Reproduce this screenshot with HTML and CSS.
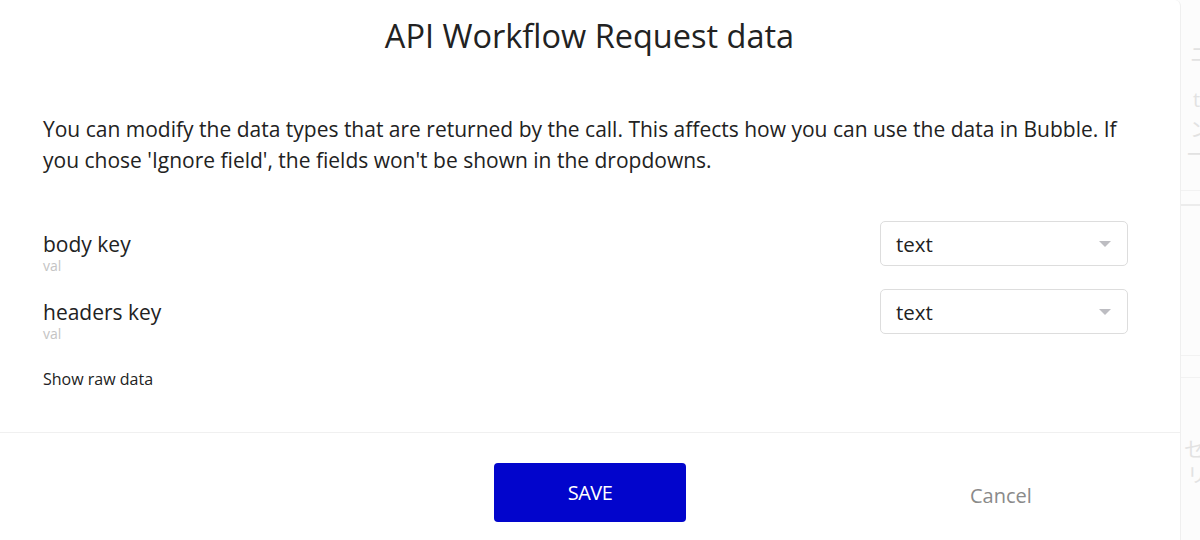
FILE: index.html
```html
<!DOCTYPE html>
<html lang="en">
<head>
  <meta charset="UTF-8" />
  <title>API Workflow Request data</title>
  <meta name="viewport" content="width=device-width, initial-scale=1.0" />
  <link rel="stylesheet" href="styles.css">
</head>
<body>

  <div class="page">
    <div class="modal">
      <h1 class="title">API Workflow Request data</h1>

      <p class="intro">You can modify the data types that are returned by the call. This affects how you can use the data in Bubble. If you chose 'Ignore field', the fields won't be shown in the dropdowns.</p>

      <div class="field-row">
        <div class="field-label">
          <div class="key">body key</div>
          <div class="val">val</div>
        </div>
        <div class="dropdown">
          <span>text</span>
          <span class="caret"></span>
        </div>
      </div>

      <div class="field-row">
        <div class="field-label">
          <div class="key">headers key</div>
          <div class="val">val</div>
        </div>
        <div class="dropdown">
          <span>text</span>
          <span class="caret"></span>
        </div>
      </div>

      <div class="raw-link">Show raw data</div>

      <div class="footer">
        <button class="save-btn">SAVE</button>
        <span class="cancel">Cancel</span>
      </div>
    </div>

    <div class="side">
      <div class="side-text t1">ニ</div>
      <div class="side-text t2">t</div>
      <div class="side-text t3">ン</div>
      <div class="side-text t4">ー</div>
      <div class="side-line l1"></div>
      <div class="side-line dotted"></div>
      <div class="side-line l2"></div>
      <div class="side-line l3"></div>
      <div class="side-text t5">セ</div>
      <div class="side-text t6">リ</div>
    </div>
  </div>

</body>
</html>
```

FILE: styles.css
```css
body {
  margin: 0;
  font-family: "Open Sans", "Noto Sans CJK JP", sans-serif;
  color: #222;
  background: #fcfcfc;
}
.page {
  display: flex;
  height: 540px;
  overflow: hidden;
}
.modal {
  width: 1181px;
  flex: none;
  background: #fff;
  border-right: 1px solid #efefef;
  border-top-right-radius: 6px;
  box-sizing: border-box;
  padding: 0 52px 0 43px;
}
.title {
  margin: 0 -8px 0 0;
  padding-top: 14px;
  font-size: 32.5px;
  font-weight: 400;
  line-height: 44px;
  text-align: center;
  color: #222;
}
.intro {
  margin: 56px 0 0;
  font-size: 21px;
  line-height: 31px;
}
.field-row {
  display: flex;
  justify-content: space-between;
  align-items: flex-start;
  margin-top: 45px;
}
.field-row + .field-row {
  margin-top: 14px;
}
.field-label {
  padding-top: 10px;
}
.key {
  font-size: 21px;
  line-height: 26px;
}
.val {
  font-size: 14px;
  line-height: 18px;
  color: #c4c4c4;
}
.dropdown {
  width: 248px;
  height: 45px;
  box-sizing: border-box;
  border: 1px solid #ddd;
  border-radius: 5px;
  display: flex;
  align-items: center;
  justify-content: space-between;
  padding: 0 16px 0 15px;
  font-size: 20.5px;
}
.caret {
  width: 0;
  height: 0;
  border-left: 6px solid transparent;
  border-right: 6px solid transparent;
  border-top: 6px solid #bdbdc2;
}
.raw-link {
  margin-top: 25px;
  font-size: 16px;
  line-height: 22px;
}
.footer {
  margin: 42px -52px 0 -43px;
  border-top: 1px solid #f0f0f0;
  padding-top: 30px;
  display: grid;
  grid-template-columns: 1fr 192px 1fr;
  align-items: center;
}
.save-btn {
  grid-column: 2;
  height: 59px;
  border: none;
  border-radius: 4px;
  background: #0205cc;
  color: #fff;
  font-family: "Open Sans", sans-serif;
  font-size: 20px;
  letter-spacing: -0.5px;
}
.cancel {
  grid-column: 3;
  justify-self: start;
  margin: 6px 0 0 284px;
  font-size: 20px;
  color: #8a8a8a;
}
.side {
  flex: 1;
  position: relative;
}
.side-text {
  position: absolute;
  left: 9px;
  font-size: 20px;
  color: #e2e2e2;
  line-height: 1;
}
.t1 { top: 45px; }
.t2 { top: 90px; left: 12px; }
.t3 { top: 120px; }
.t4 { top: 145px; left: 5px; }
.t5 { top: 440px; left: 3px; }
.t6 { top: 466px; left: 6px; }
.side-line {
  position: absolute;
  left: 0;
  right: 0;
  height: 1px;
  background: #f2f2f2;
}
.l1 { top: 190px; }
.dotted { top: 204px; height: 2px; background: #ececec; }
.l2 { top: 355px; }
.l3 { top: 377px; }
```
